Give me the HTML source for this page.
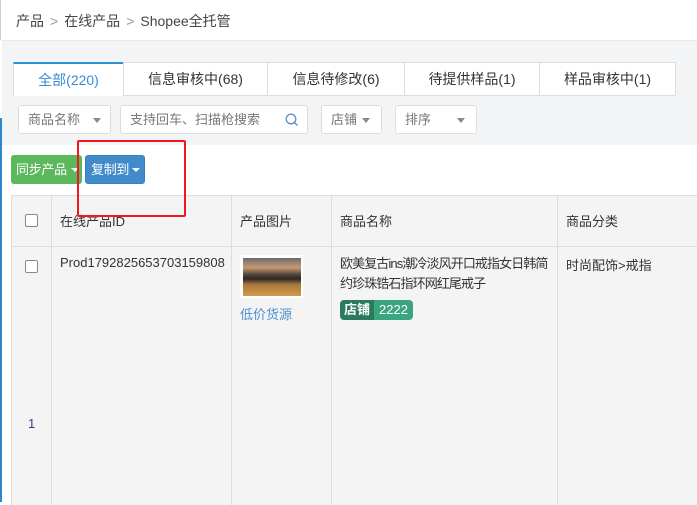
<!DOCTYPE html>
<html><head><meta charset="utf-8"><style>
*{box-sizing:border-box;margin:0;padding:0}
body{width:697px;height:502px;overflow:hidden;background:#fff;font-family:"Liberation Sans","Noto Sans CJK SC",sans-serif;font-size:13px;color:#333;position:relative}
.a{position:absolute}
.bc{left:16px;top:11px;font-size:14px;color:#444}
.bc span{color:#999;margin:0 6px}
.gray{left:2px;top:40px;width:695px;height:105px;background:#f3f4f6;border-top:1px solid #e8e8e8}
.tab{top:62px;height:34px;background:#fff;border:1px solid #ddd;text-align:center;line-height:33px;font-size:14px;color:#333}
.tab.on{border-top:2px solid #2f8fd6;color:#3a8bd1;border-bottom:none}
.sel{top:105px;height:29px;background:#fff;border:1px solid #ddd;border-radius:3px;line-height:27px;padding-left:9px;color:#777;font-size:13px}
.car{position:absolute;width:0;height:0;border-left:4px solid transparent;border-right:4px solid transparent;border-top:5px solid #888;top:12px}
.btn{top:155px;height:29px;border-radius:3px;color:#fff;line-height:29px;padding-left:5px;font-size:13px;letter-spacing:-0.3px}
.tbl{left:11px;top:195px;width:690px;height:310px;background:#f4f4f4;border-left:1px solid #ddd;border-top:1px solid #ddd}
.vl{top:195px;width:1px;height:310px;background:#ddd}
.cb{width:13px;height:13px;border:1px solid #888;border-radius:2px;background:#fff}
</style></head><body>
<div class="a" style="left:0;top:0;width:1px;height:40px;background:#ccc"></div>
<div class="a bc">产品<span>&gt;</span>在线产品<span>&gt;</span>Shopee全托管</div>
<div class="a gray"></div>
<div class="a" style="left:0;top:118px;width:2px;height:384px;background:#2f86c8"></div>
<div class="a tab on" style="left:13px;width:111px">全部(220)</div>
<div class="a tab" style="left:123px;width:145px">信息审核中(68)</div>
<div class="a tab" style="left:267px;width:138px">信息待修改(6)</div>
<div class="a tab" style="left:404px;width:136px">待提供样品(1)</div>
<div class="a tab" style="left:539px;width:137px">样品审核中(1)</div>
<div class="a sel" style="left:18px;width:93px">商品名称<i class="car" style="left:74px"></i></div>
<div class="a sel" style="left:120px;width:188px">支持回车、扫描枪搜索
<svg style="position:absolute;left:164px;top:7px" width="14" height="14"><circle cx="6" cy="6" r="4.8" fill="none" stroke="#5b8fc7" stroke-width="1.3"/><line x1="9.5" y1="9.5" x2="12.5" y2="12.5" stroke="#5b8fc7" stroke-width="1.3"/></svg></div>
<div class="a sel" style="left:321px;width:61px">店铺<i class="car" style="left:40px"></i></div>
<div class="a sel" style="left:395px;width:82px">排序<i class="car" style="left:61px"></i></div>
<div class="a btn" style="left:11px;width:71px;background:#5cb85c">同步产品<i class="car" style="left:60px;border-top-color:#fff;border-top-width:4px;top:13px"></i></div>
<div class="a btn" style="left:85px;width:60px;background:#428bca;border:1px solid #3a7fbd;line-height:27px">复制到<i class="car" style="left:46px;border-top-color:#fff;border-top-width:4px;top:12px"></i></div>
<div class="a tbl"></div>
<div class="a" style="left:11px;top:246px;width:690px;height:1px;background:#ddd"></div>
<div class="a vl" style="left:51px"></div>
<div class="a vl" style="left:231px"></div>
<div class="a vl" style="left:331px"></div>
<div class="a vl" style="left:557px"></div>
<div class="a" style="left:12px;top:196px;width:690px;height:50px;background:#f2f2f2;z-index:-1"></div>
<div class="a cb" style="left:25px;top:214px"></div>
<div class="a cb" style="left:25px;top:260px"></div>
<div class="a" style="left:60px;top:211px">在线产品ID</div>
<div class="a" style="left:240px;top:211px">产品图片</div>
<div class="a" style="left:340px;top:211px">商品名称</div>
<div class="a" style="left:566px;top:211px">商品分类</div>
<div class="a" style="left:60px;top:255px">Prod1792825653703159808</div>
<div class="a" style="left:240px;top:255px;width:63px;height:43px;background:#fff;padding:3px">
<div style="width:58px;height:38px;background:linear-gradient(#6d6a70 0%,#c89a70 25%,#4a4038 45%,#2e2a22 55%,#a9793c 70%,#d39a4a 100%)"></div></div>
<div class="a" style="left:240px;top:304px;color:#4a90d0">低价货源</div>
<div class="a" style="left:340px;top:254px;line-height:20px;width:230px;letter-spacing:-0.9px">欧美复古ins潮冷淡风开口戒指女日韩简<br>约珍珠锆石指环网红尾戒子</div>
<div class="a" style="left:340px;top:300px;height:20px;border-radius:4px;overflow:hidden;color:#fff;font-size:13px;line-height:20px;display:flex"><span style="background:#2b7a5d;padding:0 4px;font-weight:bold">店铺</span><span style="background:#3aa57e;padding:0 5px">2222</span></div>
<div class="a" style="left:566px;top:255px">时尚配饰&gt;戒指</div>
<div class="a" style="left:28px;top:416px;color:#3a3a8a">1</div>
<div class="a" style="left:77px;top:140px;width:109px;height:77px;border:2px solid #f0191f;border-radius:2px"></div>
</body></html>
